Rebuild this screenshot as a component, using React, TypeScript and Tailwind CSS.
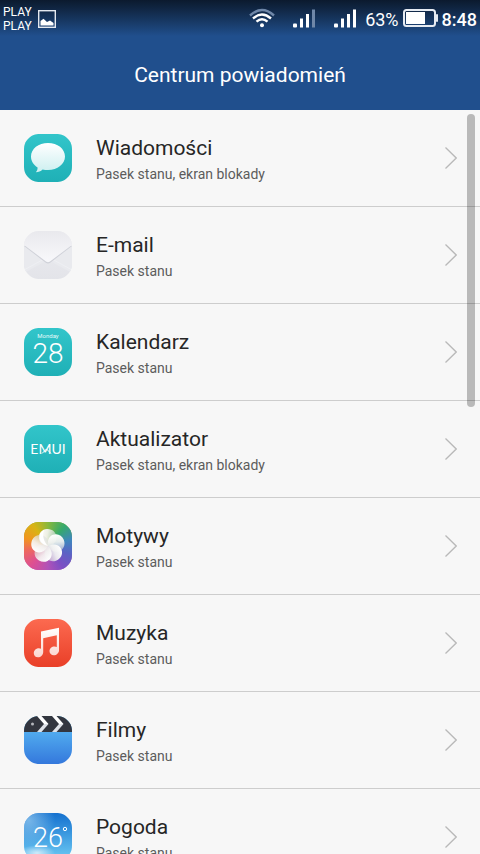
import React from 'react';

const SQUIRCLE =
  'M16 0H32C37 0 40 1 43.500 4.500C47 8 48 11 48 16V32C48 37 47 40 43.500 43.500C40 47 37 48 32 48H16C11 48 8 47 4.500 43.500C1 40 0 37 0 32V16C0 11 1 8 4.500 4.500C8 1 11 0 16 0Z';

interface TileProps {
  id: string;
  from: string;
  to: string;
  children?: React.ReactNode;
}

function Tile({ id, from, to, children }: TileProps) {
  return (
    <svg viewBox="0 0 48 48" className="size-12 shrink-0" aria-hidden="true">
      <defs>
        <linearGradient id={`${id}-bg`} x1="0" y1="0" x2="0" y2="1">
          <stop offset="0" stopColor={from} />
          <stop offset="1" stopColor={to} />
        </linearGradient>
        <clipPath id={`${id}-clip`}>
          <path d={SQUIRCLE} />
        </clipPath>
      </defs>
      <g clipPath={`url(#${id}-clip)`}>
        <rect width="48" height="48" fill={`url(#${id}-bg)`} />
        {children}
      </g>
    </svg>
  );
}

function MessagesIcon() {
  return (
    <Tile id="msg" from="#32c5ca" to="#1fb0b6">
      <defs>
        <linearGradient id="msg-bubble" x1="0" y1="0" x2="0" y2="1">
          <stop offset="0" stopColor="#fff" />
          <stop offset="1" stopColor="#cdeff0" />
        </linearGradient>
      </defs>
      <path
        d="M24 9C33.500 9 41 14.800 41 22.500C41 30 33.500 36 24 36C22 36 20.300 35.800 18.600 35.400C16.800 37.200 14.500 38.200 11.800 38.200C13 37 13.600 35.600 13.600 33.500C9.500 31 7 27 7 22.500C7 14.800 14.500 9 24 9Z"
        fill="url(#msg-bubble)"
      />
    </Tile>
  );
}

function MailIcon() {
  return (
    <Tile id="mail" from="#ececf0" to="#e3e4e9">
      <defs>
        <linearGradient id="mail-flap" x1="0" y1="0" x2="0" y2="1">
          <stop offset="0" stopColor="#e9e9ed" />
          <stop offset="1" stopColor="#f8f8fb" />
        </linearGradient>
      </defs>
      <path d="M0 14L20 31L0 42Z" fill="#e9eaee" />
      <path d="M48 14L28 31L48 42Z" fill="#e9eaee" />
      <path d="M0 39L20 28H28L48 39" fill="none" stroke="#eeeff3" strokeWidth="1" />
      <path d="M0 15L21.500 31.500Q24 33.500 26.500 31.500L48 15Z" fill="#cfd1d8" />
      <path d="M0 0H48V14L26 30.500Q24 32 22 30.500L0 14Z" fill="url(#mail-flap)" />
    </Tile>
  );
}

function CalendarIcon() {
  return (
    <Tile id="cal" from="#32c5ca" to="#1fb0b6">
      <text x="24" y="9.500" textAnchor="middle" fontSize="6" fill="#e6fafa">
        Monday
      </text>
      <text x="24" y="35" textAnchor="middle" fontSize="28" fontWeight="300" fill="#fff">
        28
      </text>
    </Tile>
  );
}

function UpdaterIcon() {
  return (
    <Tile id="emui" from="#32c5ca" to="#1fb0b6">
      <text
        x="24"
        y="29"
        textAnchor="middle"
        fontSize="14"
        fontFamily="Lato, sans-serif"
        fill="#fff"
      >
        EMUI
      </text>
      <path d="M18 28.500L22.500 24L27 28.500" fill="none" stroke="#fff" />
    </Tile>
  );
}

const PETALS = [-4, 68, 140, 212, 284];

function ThemesIcon() {
  return (
    <Tile id="theme" from="#8fb03a" to="#b254b8">
      <foreignObject width="48" height="48">
        <div className="size-12 bg-[conic-gradient(from_0deg,#88b83c,#35a96c_40deg,#3f86bd_75deg,#5b62c4_110deg,#7c4fc4_145deg,#b052b8_180deg,#dd4f93_220deg,#ee6a5c_260deg,#f0961f_290deg,#d8b414_325deg,#88b83c)]" />
      </foreignObject>
      <defs>
        <linearGradient id="theme-petal" x1="0" y1="0.300" x2="1" y2="0.600">
          <stop offset="0" stopColor="#fff" />
          <stop offset="0.450" stopColor="#f4f4f2" stopOpacity="0.920" />
          <stop offset="1" stopColor="#d9dcdc" stopOpacity="0.550" />
        </linearGradient>
      </defs>
      {PETALS.map((angle) => (
        <path
          key={angle}
          transform={`rotate(${angle} 24 24)`}
          d="M24 24C18 22.500 15.500 19 15.500 15.300C15.500 10.500 19.300 7 24 7C29.500 7 33 11 33 15.500C33 20 29.500 24 24 24Z"
          fill="url(#theme-petal)"
        />
      ))}
      <path d="M24 24C18 22.500 15.500 19 15.500 15.300C15.500 12 17.500 9.300 20 8C18 14 20 20 24 24Z" fill="#fff" />
    </Tile>
  );
}

function MusicIcon() {
  return (
    <Tile id="music" from="#fc6a50" to="#e93f28">
      <defs>
        <linearGradient id="music-note" x1="0" y1="0" x2="0" y2="1">
          <stop offset="0" stopColor="#fff" />
          <stop offset="1" stopColor="#fbd6cf" />
        </linearGradient>
      </defs>
      <path
        d="M17 12.500L35 8.800V31.500C35 34 32.500 36.300 29.800 36.300C27.300 36.300 25.500 34.600 25.500 32.300C25.500 29.500 27.800 27.500 30.500 27.500C31.400 27.500 32.200 27.700 32.800 28V16.200L19.200 19.200V33C19.200 36 16.800 38.300 14 38.300C11.500 38.300 9.800 36.500 9.800 34.200C9.800 31.500 12 29.300 14.800 29.300C15.700 29.300 16.500 29.500 17 29.800Z"
        fill="url(#music-note)"
      />
    </Tile>
  );
}

function MoviesIcon() {
  return (
    <Tile id="movie" from="#5fc4f8" to="#3478dc">
      <rect width="48" height="16" fill="#33363f" />
      <circle cx="8.500" cy="8" r="1.500" fill="#b6b8be" />
      <path d="M13 0H17.500L24.500 8H20Z" fill="#fff" />
      <path d="M20 8H24.500L17.500 16H13Z" fill="#dfe2e8" />
      <path d="M28 0H32.500L39.500 8H35Z" fill="#fff" />
      <path d="M35 8H39.500L32.500 16H28Z" fill="#dfe2e8" />
    </Tile>
  );
}

function WeatherIcon() {
  return (
    <Tile id="weather" from="#1571cf" to="#6fcdf5">
      <defs>
        <radialGradient id="weather-haze" cx="0.100" cy="0.150" r="0.550">
          <stop offset="0" stopColor="#9ccdf0" stopOpacity="0.700" />
          <stop offset="1" stopColor="#9ccdf0" stopOpacity="0" />
        </radialGradient>
        <radialGradient id="weather-cloud">
          <stop offset="0" stopColor="#fff" stopOpacity="0.700" />
          <stop offset="1" stopColor="#fff" stopOpacity="0" />
        </radialGradient>
      </defs>
      <rect width="48" height="48" fill="url(#weather-haze)" />
      <ellipse cx="13" cy="40" rx="18" ry="8" fill="url(#weather-cloud)" />
      <text x="9" y="34" fontSize="27" fontWeight="300" fill="#fff">
        26
      </text>
      <circle cx="41" cy="16" r="1.700" fill="none" stroke="#fff" />
    </Tile>
  );
}

function StatusBar() {
  return (
    <div className="flex h-9 items-center justify-between bg-linear-to-b from-[#0b1a2e] to-[#204f8d] px-[3px] text-white">
      <div className="flex items-center gap-[6px] pt-[2px]">
        <div className="text-xs leading-[14px]">
          <p>PLAY</p>
          <p>PLAY</p>
        </div>
        <svg viewBox="0 0 18 18" className="size-[18px]" aria-hidden="true">
          <rect x="0.700" y="0.700" width="16.600" height="16.600" fill="none" stroke="#e4e9f0" strokeWidth="1.400" />
          <path d="M2.500 15.500V11L5.500 8.800L9 12L12 10.500L15.500 13V15.500Z" fill="#fff" />
        </svg>
      </div>
      <div className="flex items-center">
        <svg viewBox="0 0 26 20" className="mr-[18px] h-5 w-[26px]" fill="none" strokeWidth="2.400" aria-hidden="true">
          <path d="M1 7.500Q13 -3.500 25 7.500" stroke="#6f87a8" />
          <path d="M4 10.500Q13 2.500 22 10.500" stroke="#fff" />
          <path d="M7.500 13.700Q13 8.800 18.500 13.700" stroke="#fff" />
          <circle cx="13" cy="17.200" r="2" fill="#fff" />
        </svg>
        <svg viewBox="0 0 23 19" className="mr-[18px] h-[19px] w-[23px]" fill="#fff" aria-hidden="true">
          <rect x="0" y="14.500" width="4" height="4" rx="1" />
          <rect x="7" y="9.500" width="3" height="9" />
          <rect x="13" y="5" width="3" height="13.500" />
          <rect x="19" y="0.500" width="3" height="18" fill="#6f87a8" />
        </svg>
        <svg viewBox="0 0 23 19" className="mr-2 h-[19px] w-[23px]" fill="#fff" aria-hidden="true">
          <rect x="0" y="14.500" width="4" height="4" rx="1" />
          <rect x="7" y="9.500" width="3" height="9" />
          <rect x="13" y="5" width="3" height="13.500" />
          <rect x="19" y="0.500" width="3" height="18" />
        </svg>
        <span className="mr-1 pt-1 text-lg leading-6">63%</span>
        <svg viewBox="0 0 35 18" className="mr-1 h-[18px] w-[35px]" aria-hidden="true">
          <rect x="1" y="1" width="31" height="16" rx="2.500" fill="none" stroke="#e6ebf2" strokeWidth="2" />
          <rect x="3" y="3" width="19" height="12" fill="#fff" />
          <rect x="33" y="5" width="2" height="8" rx="1" fill="#e6ebf2" />
        </svg>
        <span className="pt-1 text-lg font-medium leading-6">8:48</span>
      </div>
    </div>
  );
}

interface AppEntry {
  name: string;
  detail: string;
  icon: React.ReactNode;
}

const ENTRIES: AppEntry[] = [
  { name: 'Wiadomości', detail: 'Pasek stanu, ekran blokady', icon: <MessagesIcon /> },
  { name: 'E-mail', detail: 'Pasek stanu', icon: <MailIcon /> },
  { name: 'Kalendarz', detail: 'Pasek stanu', icon: <CalendarIcon /> },
  { name: 'Aktualizator', detail: 'Pasek stanu, ekran blokady', icon: <UpdaterIcon /> },
  { name: 'Motywy', detail: 'Pasek stanu', icon: <ThemesIcon /> },
  { name: 'Muzyka', detail: 'Pasek stanu', icon: <MusicIcon /> },
  { name: 'Filmy', detail: 'Pasek stanu', icon: <MoviesIcon /> },
  { name: 'Pogoda', detail: 'Pasek stanu', icon: <WeatherIcon /> },
];

function EntryRow({ name, detail, icon }: AppEntry) {
  return (
    <li className="border-b border-[#cdcdcd]">
      <button type="button" className="flex h-24 w-full items-center gap-6 pl-6 pr-[23px] text-left">
        {icon}
        <span className="min-w-0 flex-1 pt-1">
          <span className="block text-[21px] leading-7 text-[#262626]">{name}</span>
          <span className="block text-sm leading-6 text-[#5c5c5c]">{detail}</span>
        </span>
        <svg viewBox="0 0 12 22" className="h-[22px] w-3 shrink-0" fill="none" stroke="#b9b9b9" strokeWidth="1.300" aria-hidden="true">
          <path d="M0.500 0.500L11.200 11L0.500 21.500" />
        </svg>
      </button>
    </li>
  );
}

export default function App() {
  return (
    <div className="flex h-screen flex-col overflow-hidden bg-[#f7f7f7] font-[Roboto,sans-serif]">
      <header className="shrink-0 bg-[#204f8d]">
        <StatusBar />
        <h1 className="pb-5 pt-6 text-center text-[21px] leading-[30px] text-white">Centrum powiadomień</h1>
      </header>
      <main className="relative min-h-0 flex-1 overflow-hidden">
        <ul>
          {ENTRIES.map((entry) => (
            <EntryRow key={entry.name} {...entry} />
          ))}
        </ul>
        <div className="absolute right-[5px] top-1 h-[293px] w-2 rounded-full bg-black/25" />
      </main>
    </div>
  );
}
